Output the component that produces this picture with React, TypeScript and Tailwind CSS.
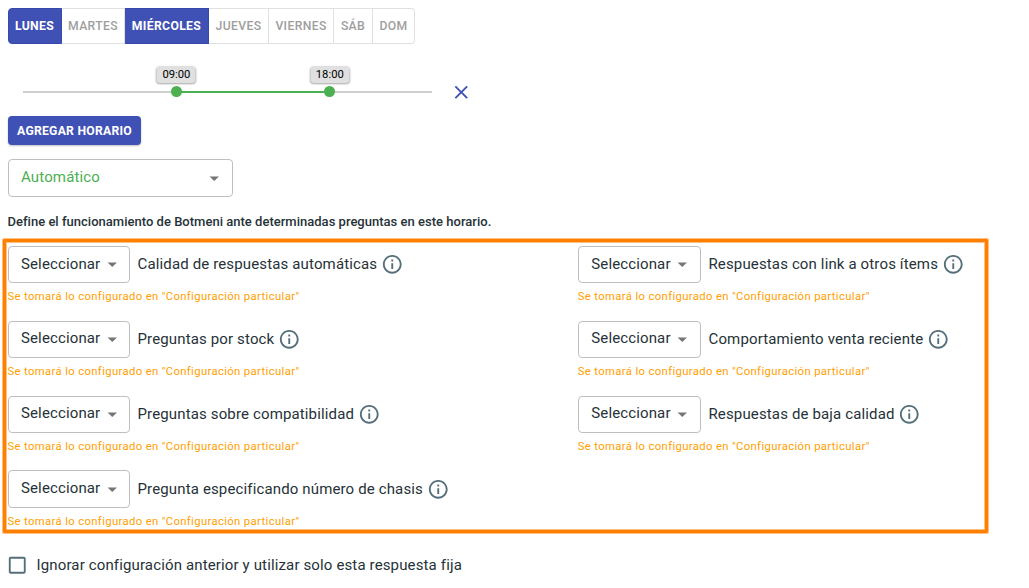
const days = [
  { label: 'LUNES', on: true, cls: 'w-[54px] rounded-l pr-px' },
  { label: 'MARTES', on: false, cls: 'w-[63px]' },
  { label: 'MIÉRCOLES', on: true, cls: 'w-[84px]' },
  { label: 'JUEVES', on: false, cls: 'w-[60px]' },
  { label: 'VIERNES', on: false, cls: 'w-[65px]' },
  { label: 'SÁB', on: false, cls: 'w-[39px]' },
  { label: 'DOM', on: false, cls: 'w-[42px] rounded-r' },
];

const left = [
  'Calidad de respuestas automáticas',
  'Preguntas por stock',
  'Preguntas sobre compatibilidad',
  'Pregunta especificando número de chasis',
];
const right = ['Respuestas con link a otros ítems', 'Comportamiento venta reciente', 'Respuestas de baja calidad'];

function Caret() {
  return (
    <svg viewBox="0 0 24 24" className="size-[22.5px] shrink-0 fill-[#757575]">
      <path d="M7 10l5 5 5-5z" />
    </svg>
  );
}

function InfoIcon() {
  return (
    <svg viewBox="0 0 24 24" className="ml-[3.75px] size-[22.5px] shrink-0 fill-[#546e7a]">
      <path d="M11 7h2v2h-2zm0 4h2v6h-2zm1-9C6.48 2 2 6.48 2 12s4.48 10 10 10 10-4.48 10-10S17.52 2 12 2zm0 18c-4.41 0-8-3.59-8-8s3.59-8 8-8 8 3.59 8 8-3.59 8-8 8z" />
    </svg>
  );
}

function Option({ label, wide }: { label: string; wide?: boolean }) {
  return (
    <div className="h-[74.8px]">
      <div className="flex h-[37.4px] items-center">
        <button
          className={`flex h-full items-center justify-between rounded border border-[#bfbfbf] pr-1.5 pl-3 text-[15px] tracking-[0.13px] ${wide ? 'w-[122.7px]' : 'w-[122px]'}`}
        >
          <span className="pb-[1.6px]">Seleccionar</span>
          <Caret />
        </button>
        <span className="ml-[7.5px] text-[15px] tracking-[0.14px]">{label}</span>
        <InfoIcon />
      </div>
      <p className="mt-[5px] -ml-[0.5px] text-[11.25px] leading-[18px] tracking-[0.375px] text-[#ffa000]">
        Se tomará lo configurado en "Configuración particular"
      </p>
    </div>
  );
}

function Thumb({ time }: { time: string }) {
  return (
    <div className="relative z-10 -mx-[5.5px] size-[11px] shrink-0 rounded-full bg-[#4caf50]">
      <span className="absolute -top-5 left-1/2 flex h-[17px] w-[39px] -translate-x-1/2 items-center justify-center rounded bg-[#e0e0e0] pt-px text-[11.25px] text-black shadow-[0_1px_2px_rgba(0,0,0,0.35)]">
        {time}
      </span>
    </div>
  );
}

export default function App() {
  return (
    <main className="flex h-[588px] w-[1029px] flex-col overflow-hidden bg-white pt-2 font-[Roboto,sans-serif] text-[#263238]">
      <div className="ml-2 flex h-9">
        {days.map((d) => (
          <button
            key={d.label}
            className={`flex items-center justify-center border-y border-r text-[12.2px] tracking-[0.35px] first:border-l ${d.cls} ${d.on ? 'border-[#3949ab] bg-[#3f51b5] font-bold text-white' : 'border-[#e0e0e0] font-medium text-[#9e9e9e]'}`}
          >
            {d.label}
          </button>
        ))}
      </div>

      <div className="mt-[38px] ml-[23px] flex h-5 items-center">
        <div className="mb-px flex h-[11px] w-[409px] items-center">
          <div className="h-0.5 w-[153.4px] bg-[#cfcfcf]" />
          <Thumb time="09:00" />
          <div className="h-0.5 w-[153.4px] bg-[#4caf50]" />
          <Thumb time="18:00" />
          <div className="h-0.5 flex-1 bg-[#cfcfcf]" />
        </div>
        <svg viewBox="0 0 24 24" className="ml-[18px] size-[22.5px] fill-[#3f51b5]">
          <path d="M19 6.41L17.59 5 12 10.59 6.41 5 5 6.41 10.59 12 5 17.59 6.41 19 12 13.41 17.59 19 19 17.59 13.41 12z" />
        </svg>
      </div>

      <button className="mt-3.5 ml-2 flex h-[29px] w-[133px] items-center justify-center rounded bg-[#3f51b5] pt-px text-[12.2px] font-bold tracking-[0.24px] text-white shadow-[0_1px_2px_rgba(0,0,0,0.25)]">
        AGREGAR HORARIO
      </button>

      <button className="mt-3.5 ml-2 flex h-[38px] w-[225px] items-center justify-between rounded border border-[#bfbfbf] pr-[7px] pl-3 text-[15px] tracking-[0.14px] text-[#4caf50]">
        <span className="pb-0.5">Automático</span>
        <Caret />
      </button>

      <h2 className="mt-[15px] ml-[7.5px] h-[27px] text-[13px] leading-5 font-medium tracking-[0.015px]">
        Define el funcionamiento de Botmeni ante determinadas preguntas en este horario.
      </h2>

      <section className="ml-[3px] flex h-[294px] w-[985px] shrink-0 rounded-[1px] border-3 border-[#ff8000] pt-1 pl-0.5 shadow-[0_0_0_1px_#ffbf80,inset_0_0_0_1px_#ffbf80]">
        <div className="w-[570.3px]">
          {left.map((l) => (
            <Option key={l} label={l} />
          ))}
        </div>
        <div>
          {right.map((l) => (
            <Option key={l} label={l} wide />
          ))}
        </div>
      </section>

      <label className="mt-[21px] ml-[6px] flex h-[23px] items-center text-[15px] tracking-[0.14px]">
        <svg viewBox="0 0 24 24" className="size-[22.5px] fill-[#546e7a]">
          <path d="M19 5v14H5V5h14m0-2H5c-1.1 0-2 .9-2 2v14c0 1.1.9 2 2 2h14c1.1 0 2-.9 2-2V5c0-1.1-.9-2-2-2z" />
        </svg>
        <span className="ml-2">Ignorar configuración anterior y utilizar solo esta respuesta fija</span>
      </label>
    </main>
  );
}
